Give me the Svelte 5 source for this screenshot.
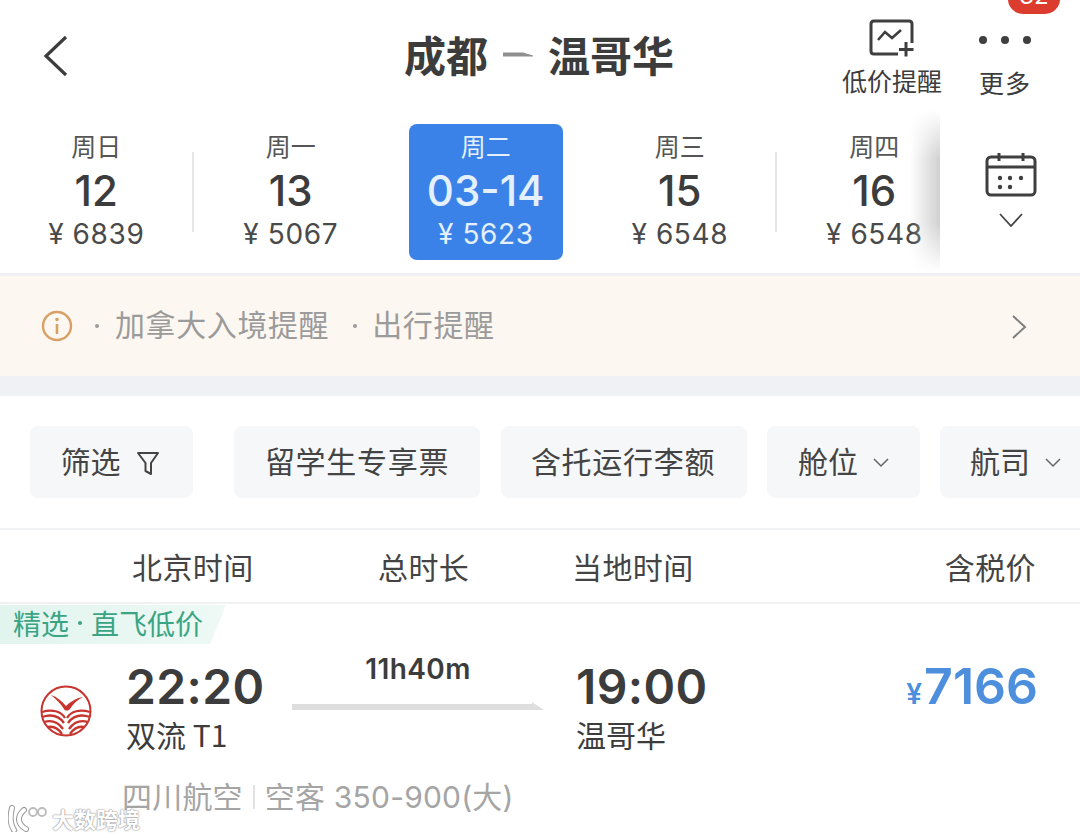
<script lang="ts">
	const days = [
		{ week: '周日', day: '12', price: '6839' },
		{ week: '周一', day: '13', price: '5067' },
		{ week: '周二', day: '03-14', price: '5623', active: true },
		{ week: '周三', day: '15', price: '6548' },
		{ week: '周四', day: '16', price: '6548' }
	];
</script>

<div class="page">
	<header class="topbar">
		<svg class="back" viewBox="0 0 28 44" width="28" height="44">
			<path d="M25 3 L5 22 L25 41" fill="none" stroke="#3c3c3c" stroke-width="3.2" />
		</svg>
		<div class="title">
			<span>成都</span>
			<svg viewBox="0 0 30 10" width="30" height="10"><path d="M0 3.5H20L30 6.5V7.5H0Z" fill="#8f8f8f" /></svg>
			<span>温哥华</span>
		</div>
		<div class="action alert">
			<svg viewBox="0 0 46 38" width="46" height="38">
				<path d="M29 35H5Q2 35 2 32V5Q2 2 5 2H40Q43 2 43 5V24" fill="none" stroke="#3f3f3f" stroke-width="3" />
				<path d="M9 21L16 13L23 19L32 11" fill="none" stroke="#3f3f3f" stroke-width="2.600" />
				<path d="M30 30.500H44.500M37 23V37.500" stroke="#3f3f3f" stroke-width="3" />
			</svg>
			<span>低价提醒</span>
		</div>
		<div class="action more">
			<div class="dots"><i></i><i></i><i></i></div>
			<span>更多</span>
			<b class="badge">32</b>
		</div>
	</header>

	<section class="dates">
		<div class="date-list">
			{#each days as d, i}
				<div class="date" class:active={d.active} class:sep={i === 1 || i === 4}>
					<span class="week">{d.week}</span>
					<span class="day">{d.day}</span>
					<span class="price">¥ {d.price}</span>
				</div>
			{/each}
		</div>
		<div class="calendar">
			<svg viewBox="0 0 52 46" width="52" height="46">
				<rect x="2" y="5" width="48" height="38" rx="4" fill="none" stroke="#3f3f3f" stroke-width="3" />
				<path d="M2 15H50M14 1V9M38 1V9" stroke="#3f3f3f" stroke-width="3" />
				<g fill="#3f3f3f">
					<circle cx="15" cy="26" r="2.200" /><circle cx="25" cy="26" r="2.200" /><circle cx="36" cy="26" r="2.200" />
					<circle cx="15" cy="35" r="2.200" /><circle cx="25" cy="35" r="2.200" />
				</g>
			</svg>
			<svg viewBox="0 0 24 14" width="24" height="14"><path d="M1 1L12 13L23 1" fill="none" stroke="#444" stroke-width="1.800" /></svg>
		</div>
	</section>

	<section class="notice">
		<svg viewBox="0 0 32 32" width="32" height="32">
			<circle cx="16" cy="16" r="14" fill="none" stroke="#d9a066" stroke-width="2.400" />
			<circle cx="16" cy="9.500" r="1.800" fill="#d9a066" />
			<path d="M16 14V24" stroke="#d9a066" stroke-width="2.600" />
		</svg>
		<b class="dot first-dot"></b>
		<span class="notice-text">加拿大入境提醒</span>
		<b class="dot"></b>
		<span class="notice-text">出行提醒</span>
		<svg class="chev" viewBox="0 0 16 26" width="16" height="26"><path d="M2 2L14 13L2 24" fill="none" stroke="#7d7d7d" stroke-width="2" /></svg>
	</section>

	<section class="filters">
		<div class="chip first">
			筛选
			<svg viewBox="0 0 24 26" width="24" height="26"><path d="M2 2H22L15 12V23L9.500 20V12Z" fill="none" stroke="#444" stroke-width="2" stroke-linejoin="round" /></svg>
		</div>
		<div class="chip second">留学生专享票</div>
		<div class="chip third">含托运行李额</div>
		<div class="chip fourth">
			舱位
			<svg viewBox="0 0 16 10" width="16" height="10"><path d="M1 1L8 8L15 1" fill="none" stroke="#666" stroke-width="1.500" /></svg>
		</div>
		<div class="chip fifth">
			航司
			<svg viewBox="0 0 16 10" width="16" height="10"><path d="M1 1L8 8L15 1" fill="none" stroke="#666" stroke-width="1.500" /></svg>
		</div>
	</section>

	<section class="columns">
		<span class="col-bj">北京时间</span>
		<span class="col-total">总时长</span>
		<span class="col-local">当地时间</span>
		<span class="col-price">含税价</span>
	</section>

	<section class="flight">
		<div class="tag"><span>精选</span><b></b><span>直飞低价</span></div>
		<div class="flight-main">
			<svg class="logo" viewBox="0 0 52 52" width="52" height="52">
				<circle cx="26" cy="26" r="24.500" fill="#fff" stroke="#c8352f" stroke-width="2" />
				<!-- gull -->
				<path d="M11 10C17 12 22 16 26 21C30 17 36 13 43 12C37 15 33 19 30 24C28 26 25 26 24 24C21 19 16 14 11 10Z" fill="#c8352f" />
				<!-- wave fan -->
				<g fill="none" stroke="#c8352f" stroke-width="2.300">
					<path d="M2 27C12 24 21 26 25 33" />
					<path d="M2 32C11 29 19 31 24 38" />
					<path d="M4 37C11 35 18 37 23 44" />
					<path d="M8 42C13 41 18 43 22 49" />
					<path d="M50 27C40 24 31 26 27 33" />
					<path d="M50 32C41 29 33 31 28 38" />
					<path d="M48 37C41 35 34 37 29 44" />
					<path d="M44 42C39 41 34 43 30 49" />
				</g>
			</svg>
			<div class="time dep">
				<strong>22:20</strong>
				<span>双流 T1</span>
			</div>
			<div class="duration">
				<span>11h40m</span>
				<svg viewBox="0 0 252 10" width="252" height="10"><path d="M0 2H240V0L252 8H0Z" fill="#dedede" /></svg>
			</div>
			<div class="time arr">
				<strong>19:00</strong>
				<span>温哥华</span>
			</div>
			<div class="fare"><small>¥</small>7166</div>
		</div>
		<div class="meta">
			<span>四川航空</span>
			<i></i>
			<span>空客 350-900(大)</span>
		</div>
	</section>

	<div class="watermark">
		<svg viewBox="0 0 42 28" width="42" height="28">
			<g fill="none" stroke-linecap="round">
				<path d="M4 4C2 12 2 20 6 26M16 6C9 12 9 20 18 25" stroke="#999" stroke-width="6" />
				<path d="M4 4C2 12 2 20 6 26M16 6C9 12 9 20 18 25" stroke="#fff" stroke-width="4" />
				<circle cx="25" cy="8" r="4" stroke="#bbb" stroke-width="1.800" />
				<circle cx="34" cy="8" r="4" stroke="#bbb" stroke-width="1.800" />
			</g>
		</svg>
		<span>大数跨境</span>
	</div>
</div>

<style>
	:global(body) {
		margin: 0;
		background: #fff;
	}

	.page {
		position: relative;
		width: 1080px;
		height: 838px;
		overflow: hidden;
		background: #fff;
		color: #3c3c3c;
		font-family: Inter, "Noto Sans CJK SC", sans-serif;
	}

	/* top bar */
	.topbar {
		position: relative;
		height: 124px;
	}
	.back {
		position: absolute;
		left: 41px;
		top: 34px;
	}
	.title {
		position: absolute;
		left: 0;
		right: 2px;
		top: 26px;
		display: flex;
		justify-content: center;
		align-items: center;
		gap: 15px;
		font-size: 42px;
		line-height: 56px;
		font-weight: 700;
		font-family: "Noto Sans CJK SC", sans-serif;
	}
	.action {
		position: absolute;
		display: flex;
		flex-direction: column;
		align-items: center;
		font-size: 25px;
		font-family: "Noto Sans CJK SC", sans-serif;
	}
	.alert {
		left: 841px;
		top: 19px;
		padding-left: 1px;
	}
	.alert span {
		line-height: 34px;
		margin-top: 6px;
	}
	.more {
		left: 979px;
		top: 36px;
	}
	.more span {
		line-height: 34px;
		margin-top: 21px;
		letter-spacing: 1px;
	}
	.dots {
		display: flex;
		gap: 14px;
	}
	.dots i {
		width: 8px;
		height: 8px;
		border-radius: 50%;
		background: #3f3f3f;
	}
	.badge {
		position: absolute;
		left: 29px;
		top: -52px;
		width: 52px;
		height: 30px;
		border-radius: 15px;
		background: #dc3c2e;
		color: #fff;
		font-family: Inter, sans-serif;
		font-size: 24px;
		font-weight: 400;
		line-height: 24px;
		text-align: center;
	}

	/* date strip */
	.dates {
		display: flex;
		height: 152px;
		border-bottom: 3px solid #eef0f4;
		box-sizing: border-box;
	}
	.date-list {
		position: relative;
		width: 940px;
		height: 136px;
		display: grid;
		grid-template-columns: repeat(5, 194.500px);
		margin-left: -1px;
	}
	.date-list::after {
		content: '';
		position: absolute;
		right: -1px;
		top: -14px;
		bottom: -12px;
		width: 30px;
		background: linear-gradient(to right, rgba(205, 205, 205, 0), rgba(200, 200, 200, 0.85));
		-webkit-mask-image: linear-gradient(to bottom, transparent, #000 30%, #000 70%, transparent);
		mask-image: linear-gradient(to bottom, transparent, #000 30%, #000 70%, transparent);
	}
	.date {
		position: relative;
		display: flex;
		flex-direction: column;
		align-items: center;
		border-radius: 8px;
		padding-top: 5px;
	}
	.date.sep::before {
		content: '';
		position: absolute;
		left: -2px;
		top: 28px;
		height: 80px;
		width: 2px;
		background: #e6e6e6;
	}
	.date.active {
		background: #3a82e8;
		margin: 0 20px 0 21px;
	}
	.week {
		font-family: "Noto Sans CJK SC", sans-serif;
		font-size: 25px;
		line-height: 32px;
		color: #555;
	}
	.day {
		font-size: 42px;
		font-weight: 500;
		line-height: 46px;
		margin-top: 7px;
	}
	.price {
		font-size: 28px;
		letter-spacing: 0.6px;
		line-height: 36px;
		margin-top: 2px;
		color: #4a4a4a;
	}
	.active .week,
	.active .price,
	.active .day {
		color: #e4f0fd;
	}
	.calendar {
		flex: 1;
		display: flex;
		flex-direction: column;
		align-items: center;
		padding-top: 28px;
		gap: 15px;
		margin-left: 2px;
	}

	/* notice */
	.notice {
		position: relative;
		height: 120px;
		box-sizing: border-box;
		display: flex;
		align-items: center;
		background: #fdf7f1;
		padding-left: 41px;
		border-bottom: 20px solid #f0f1f4;
		font-family: "Noto Sans CJK SC", sans-serif;
		font-size: 30px;
		color: #9b9b9b;
	}
	.notice-text {
		letter-spacing: 0.6px;
		margin-top: -7px;
	}
	.dot {
		width: 4px;
		height: 4px;
		border-radius: 50%;
		background: #9b9b9b;
		margin: 0 15px 0 24px;
	}
	.dot.first-dot {
		margin-left: 22px;
		margin-right: 16px;
	}
	.chev {
		position: absolute;
		right: 53px;
		top: 38px;
	}

	/* filters */
	.filters {
		display: flex;
		gap: 20px;
		height: 134px;
		padding: 30px 0 0 30px;
		box-sizing: border-box;
		border-bottom: 2px solid #f0f1f3;
		font-family: "Noto Sans CJK SC", sans-serif;
		font-size: 30px;
		color: #444;
	}
	.chip {
		flex: none;
		height: 72px;
		display: flex;
		align-items: center;
		justify-content: center;
		border-radius: 8px;
		background: #f6f7f9;
		box-sizing: border-box;
		padding-bottom: 4px;
		gap: 15px;
	}
	.chip svg {
		margin-top: 6px;
	}
	.first { width: 163px; margin-right: 21px; padding-right: 3px; }
	.first svg { margin-top: 8px; }
	.second { width: 246px; margin-right: 1px; letter-spacing: 0.7px; }
	.third { width: 246px; letter-spacing: 0.7px; padding-right: 2px; }
	.fourth { width: 153px; }
	.fifth { width: 160px; justify-content: flex-start; padding-left: 30px; }

	/* table header */
	.columns {
		position: relative;
		height: 74px;
		box-sizing: border-box;
		border-bottom: 2px solid #f0f1f3;
		font-family: "Noto Sans CJK SC", sans-serif;
		font-size: 30px;
		letter-spacing: 0.4px;
		line-height: 72px;
		color: #444;
	}
	.columns span {
		position: absolute;
		top: 0;
	}
	.col-bj { left: 132px; }
	.col-total { left: 378px; }
	.col-local { left: 572px; }
	.col-price { right: 44px; }

	/* flight */
	.flight {
		position: relative;
	}
	.tag {
		width: 226px;
		height: 39px;
		margin-top: 1px;
		padding: 0 0 4px 13px;
		box-sizing: border-box;
		display: flex;
		align-items: center;
		clip-path: polygon(0 0, 100% 0, 93% 100%, 0 100%);
		background: linear-gradient(to right, #e2f4ee, #eef9f5);
		color: #3aa583;
		font-family: "Noto Sans CJK SC", sans-serif;
		font-size: 28px;
		line-height: 38px;
	}
	.tag b {
		width: 4px;
		height: 4px;
		border-radius: 50%;
		background: #3aa583;
		margin: 0 9px;
	}
	.flight-main {
		position: relative;
		height: 116px;
	}
	.logo {
		position: absolute;
		left: 40px;
		top: 41px;
	}
	.time {
		position: absolute;
		top: 15px;
		display: flex;
		flex-direction: column;
	}
	.dep { left: 126px; }
	.arr { left: 576px; }
	.time strong {
		font-weight: 600;
		font-size: 48px;
		letter-spacing: 0.4px;
		line-height: 56px;
	}
	.time span {
		font-family: "Noto Sans CJK SC", Inter, sans-serif;
		font-size: 30px;
		line-height: 42px;
		margin-top: -2px;
	}
	.duration {
		position: absolute;
		left: 292px;
		top: 9px;
		width: 252px;
		display: flex;
		flex-direction: column;
		align-items: center;
	}
	.duration span {
		font-weight: 600;
		font-size: 28px;
		letter-spacing: 0.4px;
		line-height: 32px;
	}
	.duration svg {
		margin-top: 17px;
	}
	.fare {
		position: absolute;
		right: 42px;
		top: 12px;
		color: #4d8fdc;
		font-weight: 600;
		font-size: 50px;
		line-height: 60px;
	}
	.fare small {
		font-size: 28px;
		margin-right: 2px;
	}
	.meta {
		position: absolute;
		left: 122px;
		top: 170px;
		display: flex;
		align-items: center;
		font-family: Inter, "Noto Sans CJK SC", sans-serif;
		font-size: 30px;
		letter-spacing: 0.2px;
		line-height: 44px;
		color: #a5a5a5;
	}
	.meta i {
		width: 2px;
		height: 24px;
		background: #e2e2e2;
		margin: 0 10px;
	}

	/* watermark over the content */
	.watermark {
		position: absolute;
		left: 8px;
		top: 802px;
		display: flex;
		align-items: center;
		gap: 2px;
		font-family: "Noto Sans CJK SC", sans-serif;
		font-size: 22px;
		font-weight: 700;
		color: #fff;
		text-shadow: 0 0 2px #8a8a8a, 0 0 1px #8a8a8a;
	}
</style>
